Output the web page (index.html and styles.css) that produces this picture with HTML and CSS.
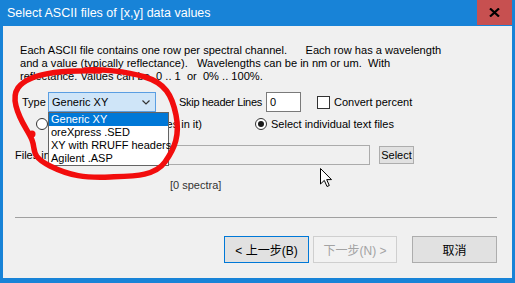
FILE: index.html
```html
<!DOCTYPE html>
<html>
<head>
  <title>Select ASCII files</title>
  <link rel="stylesheet" href="styles.css">
</head>
<body>

  <div class="window">
    <div class="titlebar">
      <span class="title">Select ASCII files of [x,y] data values</span>
      <span class="close">
        <svg width="11" height="9" viewBox="0 0 11 9"><path d="M1,0.5 L10,8.5 M10,0.5 L1,8.5" stroke="#000" stroke-width="2.2"/></svg>
      </span>
    </div>

    <div class="client">
      <p class="intro">Each ASCII file contains one row per spectral channel.&nbsp;&nbsp;&nbsp;&nbsp;&nbsp; Each row has a wavelength<br>and a value (typically reflectance).&nbsp;&nbsp; Wavelengths can be in nm or um.&nbsp; With<br>reflectance. Values can be&nbsp; 0 .. 1&nbsp; or&nbsp; 0% .. 100%.</p>

      <div class="row type-row">
        <span class="lbl-type">Type</span>
        <div class="combo">
          <span>Generic XY</span>
          <svg width="8" height="5" viewBox="0 0 8 5"><polyline points="0.5,0.5 4,4 7.5,0.5" fill="none" stroke="#333" stroke-width="1.2"/></svg>
        </div>
        <span class="lbl-skip">Skip header Lines</span>
        <div class="num">0</div>
        <span class="check"></span>
        <span>Convert percent</span>
      </div>

      <div class="row radio-row">
        <span class="radio"></span>
        <span class="radio-lbl first"><span>Select folder (all files in it)</span></span>
        <span class="radio on"></span>
        <span class="radio-lbl">Select individual text files</span>
      </div>

      <div class="row files-row">
        <span class="lbl-files">Files in folder</span>
        <div class="path"></div>
        <button class="btn-select">Select</button>
      </div>

      <div class="count">[0 spectra]</div>

      <div class="sep"></div>

      <div class="buttons">
        <button class="btn default">&lt; 上一步(B)</button>
        <button class="btn disabled">下一步(N) &gt;</button>
        <button class="btn cancel">取消</button>
      </div>

      <ul class="dropdown">
        <li class="sel">Generic XY</li>
        <li>oreXpress .SED</li>
        <li>XY with RRUFF headers</li>
        <li>Agilent .ASP</li>
      </ul>
    </div>

    <!-- hand drawn annotation -->
    <svg class="marker" width="515" height="283" viewBox="0 0 515 283">
      <path d="M85,70 C100,69 125,71 145,77 S172,95 176,115 S175,148 165,162 S135,176 110,177 S70,176 50,166 S36,150 32,140 S20,122 16,106 S20,83 32,78 S65,70 100,71" fill="none" stroke="#f20d0d" stroke-width="5.5" stroke-linecap="round" stroke-linejoin="round"/>
      <circle cx="32" cy="134" r="3.5" fill="#f20d0d"/>
    </svg>

    <svg class="cursor" width="13" height="20" viewBox="0 0 13 20">
      <path d="M0.5,0.5 L0.5,16 L4.3,12.4 L7,18.5 L9.3,17.5 L6.7,11.6 L11.5,11.6 Z" fill="#fff" stroke="#000" stroke-width="1"/>
    </svg>
  </div>

</body>
</html>
```

FILE: styles.css
```css
body { margin: 0; font-family: "Liberation Sans", Arial, sans-serif; font-size: 11px; color: #000; }

.window {
  width: 515px;
  height: 283px;
  background: #1883d7;
  position: relative;
  display: flex;
  flex-direction: column;
}
.titlebar {
  height: 26px;
  display: flex;
  align-items: flex-start;
  color: #fff;
  font-size: 12.5px;
}
.title { flex: 1; padding: 6px 0 0 7px; }
.close {
  width: 35px;
  height: 25px;
  margin-right: 3px;
  background: #c75050;
  display: flex;
  align-items: center;
  justify-content: center;
}

.client {
  margin: 0 3px;
  height: 252px;
  background: #f0f0f0;
  position: relative;
}
.intro {
  margin: 0;
  padding: 18px 0 0 17px;
  height: 36px;
  font-size: 11.1px;
  line-height: 13px;
  overflow: hidden;
  white-space: nowrap;
}

.row { display: flex; align-items: center; white-space: nowrap; }

.type-row { height: 20px; margin-top: 12px; padding-left: 19px; }
.lbl-type { width: 26px; }
.combo {
  width: 108px;
  height: 20px;
  box-sizing: border-box;
  border: 1px solid #5a9ee2;
  background: #cfe5f8;
  display: flex;
  align-items: center;
  justify-content: space-between;
  padding: 0 5px 0 3px;
}
.lbl-skip { margin-left: 23px; width: 87px; letter-spacing: -0.3px; }
.num {
  width: 35px;
  height: 20px;
  box-sizing: border-box;
  border: 1px solid #7a7a7a;
  background: #fff;
  padding-left: 3px;
  line-height: 18px;
}
.check {
  width: 13px;
  height: 13px;
  box-sizing: border-box;
  border: 1px solid #333;
  background: #fff;
  margin: 0 4px 0 16px;
}

.radio-row { height: 16px; margin-top: 4px; padding-left: 33px; }
.radio {
  width: 12px;
  height: 12px;
  box-sizing: border-box;
  border: 1px solid #333;
  border-radius: 50%;
  background: #fff;
  margin-right: 4px;
  display: flex;
  align-items: center;
  justify-content: center;
}
.radio.on::after {
  content: "";
  width: 6px;
  height: 6px;
  border-radius: 50%;
  background: #1a1a1a;
}
.radio-lbl.first {
  width: 150px;
  margin-right: 53px;
  display: flex;
  justify-content: flex-end;
  overflow: hidden;
}

.files-row { height: 20px; margin-top: 13px; padding-left: 12px; }
.lbl-files { width: 48px; overflow: hidden; }
.path {
  width: 307px;
  height: 20px;
  box-sizing: border-box;
  border: 1px solid #ababab;
  background: #f0f0f0;
}
.btn-select {
  margin-left: 9px;
  width: 35px;
  height: 18px;
  padding: 0;
  font: inherit;
  background: #e1e1e1;
  border: 1px solid #adadad;
}

.count { margin-top: 13px; padding-left: 167px; height: 14px; line-height: 14px; color: #333; }

.sep { margin: 25px 0 0 12px; width: 482px; height: 1px; background: #a0a0a0; }

.buttons {
  display: flex;
  justify-content: flex-end;
  padding-right: 15px;
  margin-top: 18px;
}
.btn {
  width: 85px;
  height: 27px;
  padding: 0;
  font-family: "Liberation Sans", "Noto Sans CJK SC", sans-serif;
  font-size: 12px;
  color: #000;
  background: #e1e1e1;
  border: 1px solid #adadad;
}
.btn.default { border-color: #0078d7; }
.btn.disabled { width: 84px; margin-left: 4px; color: #a3a3a3; background: #f2f2f2; border-color: #cfcfcf; }
.btn.cancel { margin-left: 15px; }

.dropdown {
  position: absolute;
  left: 45px;
  top: 86px;
  width: 119px;
  margin: 0;
  padding: 0;
  list-style: none;
  background: #fff;
  border: 1px solid #646464;
}
.dropdown li { height: 13px; line-height: 13px; padding-left: 2px; white-space: nowrap; }
.dropdown li.sel { background: #0078d7; color: #fff; }

.marker { position: absolute; left: 0; top: 0; pointer-events: none; }
.cursor { position: absolute; left: 320px; top: 168px; }
```
